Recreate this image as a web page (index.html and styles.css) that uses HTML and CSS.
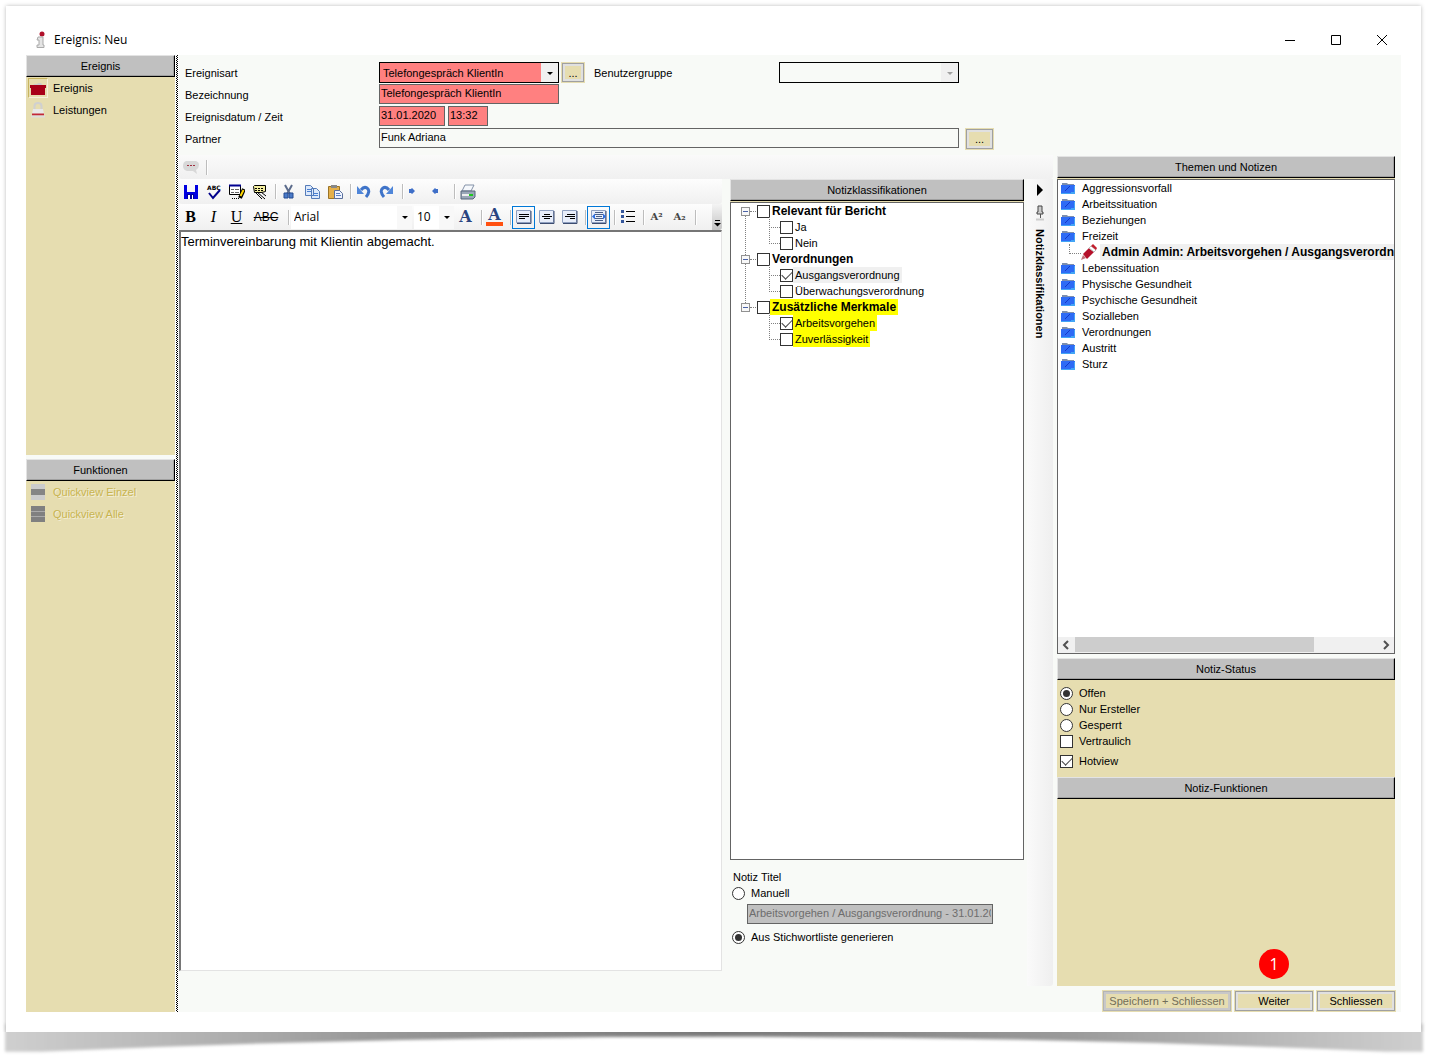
FILE: index.html
```html
<!DOCTYPE html>
<html lang="de">
<head>
    <meta charset="UTF-8">
    <meta name="viewport" content="width=device-width, initial-scale=1.0">
    <title>Ereignis: Neu</title>
    <link rel="stylesheet" href="styles.css">
</head>
<body>
    <!-- shared icons -->
    <svg class="defs" aria-hidden="true">
        <symbol id="folder" viewBox="0 0 14 12">
            <path d="M1 3V1h5l1 1h6v2H1z" fill="#7d8fae"/>
            <path d="M0 3h14v9H0z" fill="#2e6bf5"/>
            <path d="M9 4L4 9" stroke="#1438c8"/>
            <path d="M0 11.500h14M13.500 4v8M10 10.500h3" stroke="#43a5f5"/>
        </symbol>
        <symbol id="page" viewBox="0 0 16 14">
            <path d="M.5.5h14v12H.5z" fill="#e8eefa" stroke="#8fa0c0"/>
            <path d="M15 1v12.500H1" fill="none" stroke="#3c4c70"/>
        </symbol>
    </svg>

    <div class="window">
        <header class="titlebar">
            <svg class="app-icon" width="12" height="18" viewBox="0 0 12 18">
                <circle cx="7" cy="3" r="2.500" fill="#b0102a"/>
                <path d="M3 6h5v8h1v2.500H2V14h2V9H2z" fill="#e4e4e4" stroke="#aaa"/>
            </svg>
            <h1>Ereignis: Neu</h1>
            <div class="window-buttons">
                <button type="button" aria-label="Minimieren"><svg width="12" height="12"><path d="M1 6.500h10" stroke="#000"/></svg></button>
                <button type="button" aria-label="Maximieren"><svg width="12" height="12"><path d="M1.500 1.500h9v9h-9z" fill="none" stroke="#000"/></svg></button>
                <button type="button" aria-label="Fenster schliessen"><svg width="12" height="12"><path d="M1 1l10 10M11 1L1 11" stroke="#000"/></svg></button>
            </div>
        </header>

        <div class="content">
            <aside class="sidebar">
                <section class="side-panel side-top">
                    <h2 class="panel-title">Ereignis</h2>
                    <a href="#" class="side-link active">
                        <span class="side-icon"><svg width="16" height="16"><path d="M3 6l1-2h3l1-1h3l2 3" fill="#ccc"/><path d="M0 5h16v3h-1v7H1V8H0z" fill="#a80018"/></svg></span>Ereignis
                    </a>
                    <a href="#" class="side-link">
                        <span class="side-icon"><svg width="16" height="16"><path d="M4.500 8V4q0-3 3.500-3t3.500 3v4" fill="none" stroke="#d0d0d0" stroke-width="2"/><path d="M3 7h10l1 5H2z" fill="#e8e8e8"/><path d="M2 12.500h12" stroke="#c22838" stroke-width="2"/><path d="M1 14.500h14" stroke="#ddd" stroke-width="2"/></svg></span>Leistungen
                    </a>
                </section>
                <section class="side-panel">
                    <h2 class="panel-title">Funktionen</h2>
                    <a href="#" class="side-link disabled">
                        <span class="side-icon"><svg width="14" height="16"><path d="M0 0h14v16H0z" fill="#ccc"/><path d="M0 5h14v6H0z" fill="#858585"/></svg></span>Quickview Einzel
                    </a>
                    <a href="#" class="side-link disabled">
                        <span class="side-icon"><svg width="14" height="16"><path d="M0 0h14v16H0z" fill="#808080"/><path d="M0 5.500h14M0 10.500h14" stroke="#aaa"/></svg></span>Quickview Alle
                    </a>
                </section>
            </aside>
            <div class="splitter"></div>

            <main class="main">
                <form class="event-form">
                    <div class="form-row">
                        <label for="art">Ereignisart</label>
                        <span class="select-box required"><select id="art"><option>Telefongespräch KlientIn</option></select></span>
                        <button type="button" class="btn btn-more">...</button>
                        <label for="gruppe" class="label-group">Benutzergruppe</label>
                        <span class="select-box"><select id="gruppe" disabled><option></option></select></span>
                    </div>
                    <div class="form-row">
                        <label for="bezeichnung">Bezeichnung</label>
                        <input type="text" id="bezeichnung" class="required" value="Telefongespräch KlientIn">
                    </div>
                    <div class="form-row">
                        <label for="datum">Ereignisdatum / Zeit</label>
                        <input type="text" id="datum" class="required date" value="31.01.2020">
                        <input type="text" id="zeit" class="required time" value="13:32" aria-label="Zeit">
                    </div>
                    <div class="form-row">
                        <label for="partner">Partner</label>
                        <input type="text" id="partner" class="partner" value="Funk Adriana">
                        <button type="button" class="btn btn-partner">...</button>
                    </div>
                </form>

                <div class="work">
                    <div class="work-left">
                        <div class="note-bar">
                            <button type="button" class="tool" aria-label="Notiz"><svg width="16" height="14"><path d="M3 1h10q3 1 3 4t-3 5l1 4-4-3H4Q0 10 0 6t3-5z" fill="#d8d8d8"/><path d="M4 5.500h2M7 5.500h2M10 5.500h2" stroke="#a03040"/></svg></button>
                            <span class="sep"></span>
                        </div>
                        <div class="columns">
                            <section class="editor">
                                <div class="toolbar">
                                    <button type="button" class="tool" aria-label="Speichern"><svg width="16" height="16"><path d="M1 1h3v7h8V1h3v14H1z" fill="#0000e0"/><path d="M4 10h7v5H4z" fill="#0000a0"/><path d="M5 11h2v4H5zM9 11h1v4H9z" fill="#fff"/></svg></button>
                                    <button type="button" class="tool" aria-label="Rechtschreibung"><svg width="16" height="16"><text x="1" y="6" class="tiny">ABC</text><path d="M3 9l4 5 7-8" fill="none" stroke="#00008b" stroke-width="2"/></svg></button>
                                    <button type="button" class="tool" aria-label="Textbaustein"><svg width="16" height="16"><path d="M.5 1.500h11v9H.5z" fill="#fff" stroke="#000"/><path d="M0 1.500h12" stroke="#000090" stroke-width="2"/><path d="M2 5.500h3M6 5.500h4M2 8.500h3M6 8.500h4" stroke="#666"/><path d="M3 14.500h8" stroke="#000" stroke-dasharray="1 1"/><path d="M15 5l-4 9" stroke="#000" stroke-width="4"/><path d="M14.500 6l-3 6" stroke="#ffd800" stroke-width="2"/></svg></button>
                                    <button type="button" class="tool" aria-label="Einfügen"><svg width="16" height="16"><path d="M1.500 2.500l1-1h11v6l-4 1h-7z" fill="#f5f0a0" stroke="#000"/><path d="M3 4.500h9M3 6.500h9" stroke="#000" stroke-dasharray="2 1"/><path d="M5 8l8 7M9 8l5 4M4 9l6 6" stroke="#000"/></svg></button>
                                    <span class="sep"></span>
                                    <button type="button" class="tool" aria-label="Ausschneiden"><svg width="16" height="16"><path d="M4 1l5 9M11 1l-5 9" stroke="#5c6c8c" stroke-width="2"/><path d="M3 9h4v5H3zM8 9h4v5H8z" fill="#4a7ac8" stroke="#244a90"/></svg></button>
                                    <button type="button" class="tool" aria-label="Kopieren"><svg width="16" height="16"><path d="M1.500 1.500h5l3 3v7h-8zM7.500 4.500h5l3 3v7h-8z" fill="#dce9fc" stroke="#557bb8"/><path d="M3 5.500h4M3 7.500h4M9 9.500h5M9 11.500h5" stroke="#4a7fd0"/></svg></button>
                                    <button type="button" class="tool" aria-label="Einsetzen"><svg width="16" height="16"><path d="M1.500 2.500h11v12h-11z" fill="#e5b04a" stroke="#9a7326"/><path d="M4 1h6v3H4z" fill="#888"/><path d="M7.500 6.500h5l3 3v5h-8z" fill="#eef3ff" stroke="#5a6f9c"/><path d="M9 9.500h4M9 11.500h5" stroke="#5a80c0"/></svg></button>
                                    <span class="sep"></span>
                                    <button type="button" class="tool" aria-label="Rückgängig"><svg width="16" height="16"><path d="M5 6q3-4 6-2 4 3-1 9" fill="none" stroke="#3f74c9" stroke-width="3"/><path d="M1 2v8h7z" fill="#4f86d9"/></svg></button>
                                    <button type="button" class="tool" aria-label="Wiederholen"><svg width="16" height="16"><path d="M10 6Q7 2 4 4q-4 3 1 9" fill="none" stroke="#3f74c9" stroke-width="3"/><path d="M14 2v8H7z" fill="#4f86d9"/></svg></button>
                                    <span class="sep"></span>
                                    <button type="button" class="tool" aria-label="Vor"><svg width="16" height="16"><path d="M1 5h2l1-1 3 3-3 3-1-1H1z" fill="#3f6fc8"/></svg></button>
                                    <button type="button" class="tool" aria-label="Zurück"><svg width="16" height="16"><path d="M7 5H5L4 4 1 7l3 3 1-1h2z" fill="#3f6fc8"/></svg></button>
                                    <span class="sep"></span>
                                    <button type="button" class="tool" aria-label="Drucken"><svg width="16" height="16"><path d="M5 1h9l-3 6H2z" fill="#f5f8fc" stroke="#8492a8"/><path d="M1 7h14v6l-2 2H1z" fill="#9aa7b8" stroke="#56647a"/><path d="M2 11h11" stroke="#eee" stroke-width="2"/><path d="M9 10h4v2H9z" fill="#1fc81f"/></svg></button>
                                </div>
                                <div class="toolbar toolbar-format">
                                    <button type="button" class="tool serif"><b>B</b></button>
                                    <button type="button" class="tool serif"><i>I</i></button>
                                    <button type="button" class="tool serif"><u>U</u></button>
                                    <button type="button" class="tool strike"><s>ABC</s></button>
                                    <span class="sep"></span>
                                    <span class="tool-select font-name"><select aria-label="Schriftart"><option>Arial</option></select></span>
                                    <span class="tool-select font-size"><select aria-label="Schriftgrösse"><option>10</option></select></span>
                                    <button type="button" class="tool letter">A</button>
                                    <span class="sep"></span>
                                    <button type="button" class="tool letter font-color">A</button>
                                    <span class="sep"></span>
                                    <button type="button" class="tool pressed" aria-label="Linksbündig"><svg width="16" height="14"><use href="#page"/><path d="M3 4.500h10M3 6.500h10M3 8.500h6" stroke="#000"/></svg></button>
                                    <button type="button" class="tool" aria-label="Zentriert"><svg width="16" height="14"><use href="#page"/><path d="M5 4.500h6M3 6.500h10M5 8.500h6" stroke="#000"/></svg></button>
                                    <button type="button" class="tool" aria-label="Rechtsbündig"><svg width="16" height="14"><use href="#page"/><path d="M5 4.500h8M3 6.500h10M8 8.500h5" stroke="#000"/></svg></button>
                                    <span class="sep"></span>
                                    <button type="button" class="tool pressed" aria-label="Blocksatz"><svg width="16" height="14"><use href="#page"/><path d="M4 2.500h8M4 4.500h8M5 6.500h6M4 8.500h8M4 10.500h8" stroke="#4a5f88"/><path d="M1 6.500l3-3v6zM15 6.500l-3-3v6z" fill="#2f6fe0"/></svg></button>
                                    <span class="sep"></span>
                                    <button type="button" class="tool" aria-label="Aufzählung"><svg width="14" height="14"><path d="M0 0h3v3H0zM0 5h3v3H0zM0 10h3v3H0z" fill="#35579c"/><path d="M5 1.500h9M5 6.500h9M5 11.500h9" stroke="#000"/></svg></button>
                                    <span class="sep"></span>
                                    <button type="button" class="tool script">A²</button>
                                    <button type="button" class="tool script">A₂</button>
                                    <span class="sep"></span>
                                    <button type="button" class="overflow" aria-label="Weitere"><svg width="7" height="7"><path d="M1 .5h5" stroke="#000"/><path d="M0 3h7L3.500 6.500z" fill="#000"/></svg></button>
                                </div>
                                <textarea class="note-text" aria-label="Notiztext">Terminvereinbarung mit Klientin abgemacht.</textarea>
                            </section>

                            <section class="classes">
                                <h2 class="panel-title">Notizklassifikationen</h2>
                                <div class="tree-box">
                                    <ul class="tree">
                                        <li>
                                            <div class="node"><span class="toggle"></span><input type="checkbox" id="c1"><label for="c1"><b>Relevant für Bericht</b></label></div>
                                            <ul>
                                                <li class="leaf"><input type="checkbox" id="c2"><label for="c2">Ja</label></li>
                                                <li class="leaf"><input type="checkbox" id="c3"><label for="c3">Nein</label></li>
                                            </ul>
                                        </li>
                                        <li>
                                            <div class="node"><span class="toggle"></span><input type="checkbox" id="c4"><label for="c4"><b>Verordnungen</b></label></div>
                                            <ul>
                                                <li class="leaf"><input type="checkbox" id="c5" checked><label for="c5" class="selected">Ausgangsverordnung</label></li>
                                                <li class="leaf"><input type="checkbox" id="c6"><label for="c6">Überwachungsverordnung</label></li>
                                            </ul>
                                        </li>
                                        <li>
                                            <div class="node"><span class="toggle"></span><input type="checkbox" id="c7"><label for="c7" class="marked"><b>Zusätzliche Merkmale</b></label></div>
                                            <ul>
                                                <li class="leaf"><input type="checkbox" id="c8" checked><label for="c8" class="marked">Arbeitsvorgehen</label></li>
                                                <li class="leaf"><input type="checkbox" id="c9"><label for="c9" class="marked">Zuverlässigkeit</label></li>
                                            </ul>
                                        </li>
                                    </ul>
                                </div>
                                <div class="note-title">
                                    <p>Notiz Titel</p>
                                    <div class="option"><input type="radio" name="titel" id="manuell"><label for="manuell">Manuell</label></div>
                                    <input type="text" class="title-input" aria-label="Titel" value="Arbeitsvorgehen / Ausgangsverordnung - 31.01.2020" disabled>
                                    <div class="option"><input type="radio" name="titel" id="generiert" checked><label for="generiert">Aus Stichwortliste generieren</label></div>
                                </div>
                            </section>

                            <div class="dock">
                                <svg width="8" height="14"><path d="M1 1v12l6-6z" fill="#000"/></svg>
                                <svg width="10" height="16"><path d="M3 1h4v6h1v2H2V7h1z" fill="#ccc" stroke="#444"/><path d="M5.500 9v4" stroke="#555"/><path d="M1 14.500h8" stroke="#ccc" stroke-width="2"/></svg>
                                <span>Notizklassifikationen</span>
                            </div>
                        </div>
                    </div>

                    <div class="topics">
                        <h2 class="panel-title">Themen und Notizen</h2>
                        <div class="topic-box">
                            <ul class="topic-list">
                                <li><svg><use href="#folder"/></svg>Aggressionsvorfall</li>
                                <li><svg><use href="#folder"/></svg>Arbeitssituation</li>
                                <li><svg><use href="#folder"/></svg>Beziehungen</li>
                                <li><svg><use href="#folder"/></svg>Freizeit</li>
                                <li class="topic-note">
                                    <svg class="pencil" viewBox="0 0 16 16"><path d="M0 16l2-5 3 3z" fill="#c07078"/><path d="M2 10l6-6 5 4-7 7z" fill="#b5102a"/><path d="M8 4l2-2 5 4-2 2z" fill="#fff" stroke="#bbb"/><path d="M10 2l2-2 4 4-1 2z" fill="#c2202f"/></svg>
                                    <b>Admin Admin: Arbeitsvorgehen / Ausgangsverordnung</b>
                                </li>
                                <li><svg><use href="#folder"/></svg>Lebenssituation</li>
                                <li><svg><use href="#folder"/></svg>Physische Gesundheit</li>
                                <li><svg><use href="#folder"/></svg>Psychische Gesundheit</li>
                                <li><svg><use href="#folder"/></svg>Sozialleben</li>
                                <li><svg><use href="#folder"/></svg>Verordnungen</li>
                                <li><svg><use href="#folder"/></svg>Austritt</li>
                                <li><svg><use href="#folder"/></svg>Sturz</li>
                            </ul>
                            <div class="scrollbar">
                                <svg width="17" height="16"><path d="M10 4L6 8l4 4" fill="none" stroke="#505050" stroke-width="2"/></svg>
                                <div class="track"><div class="thumb"></div></div>
                                <svg width="17" height="16"><path d="M7 4l4 4-4 4" fill="none" stroke="#505050" stroke-width="2"/></svg>
                            </div>
                        </div>

                        <h2 class="panel-title">Notiz-Status</h2>
                        <div class="status">
                            <div class="option"><input type="radio" name="status" id="offen" checked><label for="offen">Offen</label></div>
                            <div class="option"><input type="radio" name="status" id="ersteller"><label for="ersteller">Nur Ersteller</label></div>
                            <div class="option"><input type="radio" name="status" id="gesperrt"><label for="gesperrt">Gesperrt</label></div>
                            <div class="option"><input type="checkbox" id="vertraulich"><label for="vertraulich">Vertraulich</label></div>
                            <div class="option hotview"><input type="checkbox" id="hotview" checked><label for="hotview">Hotview</label></div>
                        </div>

                        <h2 class="panel-title">Notiz-Funktionen</h2>
                        <div class="functions"></div>
                    </div>
                </div>

                <footer class="actions">
                    <button type="button" class="btn btn-save" disabled>Speichern + Schliessen</button>
                    <div class="step">
                        <span class="badge">1</span>
                        <button type="button" class="btn">Weiter</button>
                    </div>
                    <button type="button" class="btn">Schliessen</button>
                </footer>
            </main>
        </div>
    </div>

    <!-- curled paper shadow under the window -->
    <svg class="curl" viewBox="0 0 1415 28" preserveAspectRatio="none" aria-hidden="true">
        <defs>
            <linearGradient id="curlFill">
                <stop offset="0" stop-color="#cfcfcf"/>
                <stop offset=".25" stop-color="#9a9a9a"/>
                <stop offset=".5" stop-color="#787878"/>
                <stop offset=".75" stop-color="#9a9a9a"/>
                <stop offset="1" stop-color="#cfcfcf"/>
            </linearGradient>
            <filter id="soft" x="-5%" y="-50%" width="110%" height="200%"><feGaussianBlur stdDeviation="1.500"/></filter>
        </defs>
        <path d="M-1-8h1418v27h-37Q708-10 35 19H-1z" fill="url(#curlFill)" filter="url(#soft)"/>
    </svg>
</body>
</html>
```
FILE: styles.css
```css
/* Page */
* {
    box-sizing: border-box;
}
body {
    display: flex;
    flex-direction: column;
    min-height: 100vh;
    margin: 0;
    padding: 6px 14px 0 6px;
    background: #fff;
    color: #000;
    font-family: "Liberation Sans", Arial, sans-serif;
    font-size: 11px;
    line-height: 16px;
}
h1, h2, p, ul {
    margin: 0;
    padding: 0;
}
ul {
    list-style: none;
}
svg {
    display: block;
    flex: none;
}
button, input, select, textarea {
    margin: 0;
    font: inherit;
    color: inherit;
}
.defs {
    position: absolute;
    width: 0;
    height: 0;
}
.window {
    position: relative;
    z-index: 1;
    display: flex;
    flex: 1;
    flex-direction: column;
    padding: 20px;
    background: #fff;
    box-shadow: 0 0 4px #bbb;
    clip-path: inset(-6px -6px 0 -6px);
}
.curl {
    width: 100%;
    height: 29px;
    overflow: visible;
}

/* Title bar */
.titlebar {
    display: flex;
    align-items: center;
    height: 29px;
    padding: 0 0 2px 9px;
}
.titlebar h1 {
    flex: 1;
    margin-left: 7px;
    font: 12px/16px "Open Sans", sans-serif;
}
.window-buttons {
    display: flex;
    gap: 4px;
    margin-right: -2px;
}
.window-buttons button {
    width: 42px;
    height: 26px;
    padding: 0 15px;
    border: 0;
    background: none;
}

/* Panels */
.content {
    display: flex;
    flex: 1;
}
.panel-title {
    flex: none;
    height: 22px;
    border: 1px solid #e3e3e3;
    border-right-color: #000;
    border-bottom-color: #000;
    background: #c0c0c0;
    box-shadow: inset -1px -1px #a0a0a0;
    font-size: 11px;
    font-weight: normal;
    line-height: 20px;
    text-align: center;
}
.sidebar {
    display: flex;
    flex: none;
    flex-direction: column;
    gap: 4px;
    width: 149px;
    background: #f8faf7;
}
.side-panel {
    flex: 1;
    background: #e6ddb0;
}
.side-top {
    flex: none;
    height: 400px;
}
.side-link {
    display: flex;
    align-items: center;
    gap: 5px;
    height: 22px;
    padding-left: 2px;
    color: #000;
    text-decoration: none;
}
.side-icon {
    display: flex;
    align-items: center;
    justify-content: center;
    width: 20px;
    height: 20px;
}
.active .side-icon {
    border: 1px solid #f5f0dc;
    border-top-color: #c8b560;
    border-left-color: #c8b560;
}
.side-link.disabled {
    color: #c8b450;
    text-shadow: 1px 1px #f4efd8;
}
.splitter {
    flex: none;
    width: 4px;
    border: solid #fff;
    border-width: 0 1px;
    background: repeating-conic-gradient(#000 0 25%, #fff 0 50%) 0 0 / 2px 2px;
}
.main {
    display: flex;
    flex: 1;
    flex-direction: column;
    min-width: 0;
    background: #f8faf7;
}

/* Event form */
.event-form {
    padding: 7px 6px 5px;
}
.form-row {
    display: flex;
    height: 22px;
}
.form-row label {
    flex: none;
    width: 194px;
    line-height: 22px;
}
.form-row .label-group {
    width: 185px;
    margin-left: 9px;
}
.form-row input, .title-input {
    width: 180px;
    height: 20px;
    padding: 0 1px 2px;
    border: 1px solid #646464;
    background: #f8faf7;
}
.form-row .date {
    width: 66px;
    margin-right: 3px;
}
.form-row .time {
    width: 40px;
}
.form-row .partner {
    width: 580px;
    margin-right: 6px;
}
.form-row .required {
    background: #ff8080;
}
.select-box {
    position: relative;
    width: 180px;
    height: 21px;
    border: 1px solid #000;
}
.select-box select {
    width: 100%;
    height: 100%;
    padding: 0 20px 0 3px;
    border: 0;
    background: linear-gradient(to left, #f0f0f0 17px, transparent 17px);
    appearance: none;
    opacity: 1;
}
.select-box::after, .tool-select::after {
    content: "";
    position: absolute;
    top: 9px;
    right: 5px;
    border: 3px solid transparent;
    border-top-color: #000;
    border-bottom: 0;
    pointer-events: none;
}
.select-box:has(:disabled)::after {
    border-top-color: #a0a0a0;
}
.btn {
    width: 80px;
    height: 22px;
    padding: 0;
    border: 1px solid #e6ddb0;
    background: #e6ddb0;
    box-shadow: inset 0 0 0 1px #a0a0a0, inset 0 0 0 3px #e0e0e0;
}
.btn:disabled {
    color: #736e58;
    box-shadow: inset 0 0 0 1px #b4b4b4, inset 0 0 0 3px #c8c8c8;
}
.btn-more {
    width: 24px;
    height: 21px;
    margin-left: 2px;
}
.btn-partner {
    width: 29px;
}
.btn-save {
    width: 130px;
}

/* Work area */
.work {
    display: flex;
    flex: 1;
    gap: 4px;
    padding-right: 6px;
}
.work-left {
    display: flex;
    flex: 1;
    flex-direction: column;
    min-width: 0;
}
.note-bar {
    display: flex;
    align-items: center;
    height: 24px;
    border-radius: 0 0 3px 3px;
    background: linear-gradient(#fafafa, #f0f0f0);
}
.columns {
    display: flex;
    flex: 1;
}
.editor {
    display: flex;
    flex: 1;
    flex-direction: column;
    min-width: 0;
    margin: 0 8px 15px 0;
}
.toolbar {
    display: flex;
    align-items: center;
    height: 25px;
    border-radius: 0 0 3px 3px;
    background: linear-gradient(#fdfdfd, #f0f0f0);
}
.toolbar-format {
    height: 26px;
}
.tool {
    display: flex;
    flex: none;
    align-items: center;
    justify-content: center;
    width: 23px;
    height: 23px;
    padding: 0;
    border: 0;
    background: none;
}
.tool.pressed {
    border: 1px solid #0078d7;
}
.tool .tiny {
    font: bold 6px "DejaVu Sans", sans-serif;
}
.serif {
    font: 16px/20px "Liberation Serif", serif;
}
.strike {
    width: 36px;
    font-size: 12px;
}
.letter {
    color: #2a4480;
    font: bold 16px/16px "DejaVu Serif", serif;
}
.font-color {
    width: 17px;
    height: 17px;
    margin: 0 3px;
    border-bottom: 4px solid #ff5010;
}
.script {
    color: #444;
    font: bold 10px/16px "DejaVu Serif", serif;
}
.sep {
    flex: none;
    width: 6px;
    height: 15px;
    border-right: 1px solid #fff;
    background: linear-gradient(#bdbdbd, #bdbdbd) 4px 0 / 1px 100% no-repeat;
}
.tool-select {
    position: relative;
    flex: none;
    height: 23px;
    background: #fff;
}
.tool-select select {
    width: 100%;
    height: 100%;
    padding: 0 3px 2px;
    border: 0;
    background: linear-gradient(to left, #f8f8f8 15px, #fff 15px);
    font: 12px "Open Sans", sans-serif;
    appearance: none;
}
.tool-select::after {
    top: 10px;
    right: 4px;
}
.font-name {
    width: 121px;
    margin: 0 2px 0 1px;
}
.font-size {
    width: 40px;
}
.overflow {
    display: flex;
    align-items: flex-end;
    justify-content: center;
    width: 10px;
    height: 100%;
    margin-left: auto;
    padding: 0 0 3px;
    border: 0;
    border-radius: 0 0 3px 0;
    background: linear-gradient(#f4f4f4, #c4c4c4);
}
.note-text {
    flex: 1;
    padding: 2px 0;
    border: 1px solid #e3e3e3;
    border-top: 2px solid #767676;
    border-left: 2px solid #767676;
    outline: 0;
    background: #fff;
    font-size: 13px;
    resize: none;
}

/* Classification tree */
.classes {
    display: flex;
    flex: none;
    flex-direction: column;
    width: 294px;
}
.tree-box, .topic-box {
    flex: 1;
    margin-top: 1px;
    border: 1px solid #646464;
    background: #fff;
    box-shadow: 0 -1px #e6ddb0;
}
.tree {
    padding-left: 10px;
}
.tree > li {
    position: relative;
}
.tree > li:not(:last-child)::before {
    content: "";
    position: absolute;
    top: 12px;
    bottom: -4px;
    left: 4px;
    border-left: 1px dotted #808080;
}
.node, .leaf {
    display: flex;
    align-items: center;
    height: 16px;
}
.toggle {
    position: relative;
    width: 9px;
    height: 9px;
    margin-right: 7px;
    border: 1px solid #919191;
    background: linear-gradient(#4b63a7, #4b63a7) 1px 3px / 5px 1px no-repeat, #f8f8f8;
}
.toggle::after {
    content: "";
    position: absolute;
    top: 3px;
    left: 8px;
    width: 6px;
    border-top: 1px dotted #808080;
}
.leaf {
    position: relative;
    padding-left: 39px;
}
.leaf::before {
    content: "";
    position: absolute;
    top: -2px;
    left: 28px;
    width: 10px;
    height: 10px;
    border: dotted #808080;
    border-width: 0 0 1px 1px;
}
.leaf + .leaf::before {
    top: -8px;
    height: 16px;
}
.node label, .leaf label {
    height: 16px;
    padding: 0 2px;
}
.node b, .topic-note b {
    font-size: 12px;
}
.marked {
    background: #ff0;
}
.selected {
    background: #f0f0f0;
}
input[type="checkbox"], input[type="radio"] {
    display: grid;
    flex: none;
    place-content: center;
    width: 13px;
    height: 13px;
    border: 1px solid #333;
    background: #fff;
    appearance: none;
}
input[type="radio"] {
    border-radius: 50%;
}
input[type="checkbox"]:checked::before {
    content: "";
    width: 9px;
    height: 5px;
    margin-bottom: 3px;
    border: solid #444;
    border-width: 0 0 1px 1px;
    transform: rotate(-45deg);
}
input[type="radio"]:checked::before {
    content: "";
    width: 7px;
    height: 7px;
    border-radius: 50%;
    background: #333;
}
.note-title {
    height: 126px;
    padding: 9px 2px 0;
}
.note-title p {
    padding-left: 1px;
}
.option {
    display: flex;
    align-items: center;
    gap: 6px;
    height: 16px;
}
.title-input {
    display: block;
    width: 246px;
    margin: 3px 0 5px 15px;
}
.title-input:disabled {
    background: #c0c0c0;
    color: #6d6d6d;
}
.dock {
    display: flex;
    flex: none;
    flex-direction: column;
    align-items: center;
    gap: 8px;
    width: 26px;
    margin-left: 3px;
    padding-top: 4px;
    border-radius: 0 0 3px 0;
    background: linear-gradient(to right, #fafafa, #efefef);
}
.dock span {
    font-weight: bold;
    line-height: 14px;
    writing-mode: vertical-rl;
}

/* Topics column */
.topics {
    display: flex;
    flex: none;
    flex-direction: column;
    width: 338px;
    padding-top: 1px;
}
.topic-box {
    display: flex;
    flex-direction: column;
    margin-bottom: 4px;
}
.topic-list {
    flex: 1;
    overflow: hidden;
}
.topic-list li {
    display: flex;
    align-items: center;
    gap: 7px;
    height: 16px;
    padding-left: 3px;
    white-space: nowrap;
}
.topic-list svg {
    width: 14px;
    height: 12px;
}
.topic-list .topic-note {
    position: relative;
    gap: 3px;
    padding-left: 23px;
    background: linear-gradient(to right, transparent 42px, #f0f0f0 42px);
}
.topic-note::before {
    content: "";
    position: absolute;
    left: 11px;
    top: 0;
    width: 11px;
    height: 9px;
    border: dotted #808080;
    border-width: 0 0 1px 1px;
}
.topic-list .pencil {
    width: 16px;
    height: 16px;
}
.topic-note b {
    padding-left: 2px;
}
.scrollbar {
    display: flex;
    height: 16px;
    background: #f0f0f0;
}
.track {
    flex: 1;
}
.thumb {
    width: 79%;
    height: 15px;
    background: #cdcdcd;
}
.status {
    padding: 5px 3px 8px;
    background: #e6ddb0;
}
.hotview {
    margin-top: 4px;
}
.functions {
    height: 187px;
    background: #e6ddb0;
}

/* Footer */
.actions {
    display: flex;
    justify-content: flex-end;
    gap: 2px;
    padding: 4px 5px 0 0;
}
.step {
    position: relative;
}
.badge {
    position: absolute;
    top: -41px;
    left: 25px;
    width: 30px;
    height: 30px;
    border-radius: 50%;
    background: #f00;
    color: #fff;
    font: 16px/30px "Open Sans", sans-serif;
    text-align: center;
}
```
